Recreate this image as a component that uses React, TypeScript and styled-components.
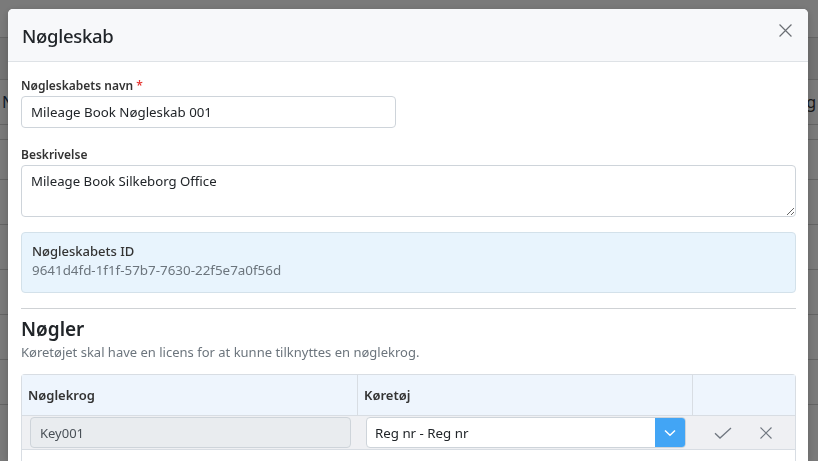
import React from 'react';
import styled, { createGlobalStyle } from 'styled-components';

// Page
//----------------------------------------------
const GlobalStyle = createGlobalStyle`
  html, body {
    margin: 0;
    padding: 0;
    background: #ffffff;
    font-family: 'Noto Sans', 'Open Sans', sans-serif;
    color: #212529;
    overflow: hidden;
  }
  * {
    box-sizing: border-box;
  }
`;

const backgroundRows = [38, 42, 45, 15, 40, 45, 45, 45, 45, 45];

const CheckIcon = () => (
  <svg width="18" height="12" viewBox="0 0 18 12" fill="none">
    <path d="M1 6.2 L6 11 L17 1" stroke="#707780" strokeWidth="1.3" />
  </svg>
);

const CrossIcon: React.FC<{ size: number; color: string }> = ({ size, color }) => (
  <svg width={size} height={size} viewBox="0 0 12 12" fill="none">
    <path d="M0.5 0.5 L11.5 11.5 M11.5 0.5 L0.5 11.5" stroke={color} strokeWidth="1.1" />
  </svg>
);

const ChevronIcon = () => (
  <svg width="12" height="8" viewBox="0 0 12 8" fill="none">
    <path d="M1 1.5 L6 6.2 L11 1.5" stroke="#ffffff" strokeWidth="1.5" />
  </svg>
);

const App: React.FC = () => {
  return (
    <>
      <GlobalStyle />
      <DivPage>
        {backgroundRows.map((h, i) => (
          <DivBgRow key={i} height={h} dark={i === 1}>
            {i === 2 && (
              <>
                <SpanBgText>N</SpanBgText>
                <SpanBgText right>g</SpanBgText>
              </>
            )}
          </DivBgRow>
        ))}
      </DivPage>

      <DivOverlay>
        <DivModal>
          <DivHeader>
            <DivTitle>Nøgleskab</DivTitle>
            <ButtonClose>
              <CrossIcon size={13} color="#6b6f74" />
            </ButtonClose>
          </DivHeader>

          <DivBody>
            <DivField>
              <Label>
                Nøgleskabets navn <SpanRequired>*</SpanRequired>
              </Label>
              <Input width={375} defaultValue="Mileage Book Nøgleskab 001" />
            </DivField>

            <DivField>
              <Label>Beskrivelse</Label>
              <TextArea defaultValue="Mileage Book Silkeborg Office" />
            </DivField>

            <DivInfo>
              <DivInfoTitle>Nøgleskabets ID</DivInfoTitle>
              <DivInfoValue>9641d4fd-1f1f-57b7-7630-22f5e7a0f56d</DivInfoValue>
            </DivInfo>

            <Hr />

            <DivSectionTitle>Nøgler</DivSectionTitle>
            <DivSectionText>
              Køretøjet skal have en licens for at kunne tilknyttes en nøglekrog.
            </DivSectionText>

            <DivTable>
              <DivHeadCell>Nøglekrog</DivHeadCell>
              <DivHeadCell>Køretøj</DivHeadCell>
              <DivHeadCell />

              <DivCell>
                <Input disabled defaultValue="Key001" />
              </DivCell>
              <DivCell>
                <DivSelect>
                  <SpanSelectValue>Reg nr - Reg nr</SpanSelectValue>
                  <DivSelectButton>
                    <ChevronIcon />
                  </DivSelectButton>
                </DivSelect>
              </DivCell>
              <DivActions>
                <ButtonAction>
                  <CheckIcon />
                </ButtonAction>
                <ButtonAction>
                  <CrossIcon size={12} color="#707780" />
                </ButtonAction>
              </DivActions>

              <DivTableFill />
            </DivTable>
          </DivBody>
        </DivModal>
      </DivOverlay>
    </>
  );
};

// Background page (behind the dialog)
//----------------------------------------------
const DivPage = styled.div`
  height: 461px;
  overflow: hidden;
  background: #ffffff;
`;

const DivBgRow = styled.div<{ height: number; dark?: boolean }>`
  height: ${(p) => p.height}px;
  border-bottom: 1px solid #d2d2d2;
  background: ${(p) => (p.dark ? '#f0f0f0' : '#ffffff')};
  display: flex;
  align-items: center;
  justify-content: space-between;
  padding: 0 2px;
`;

const SpanBgText = styled.span<{ right?: boolean }>`
  font-size: 16px;
  color: ${(p) => (p.right ? '#333333' : '#1d3a5c')};
`;

// Dialog
//----------------------------------------------
const DivOverlay = styled.div`
  position: fixed;
  inset: 0;
  background: rgba(0, 0, 0, 0.52);
  padding: 9px 0 0 8px;
  overflow: hidden;
`;

const DivModal = styled.div`
  width: 800px;
  height: 452px;
  background: #ffffff;
  border-radius: 5px 5px 0 0;
  overflow: hidden;
  box-shadow: 0 2px 8px rgba(0, 0, 0, 0.2);
`;

const DivHeader = styled.div`
  height: 53px;
  background: #f7f8fa;
  border-bottom: 1px solid #dee2e6;
  display: flex;
  align-items: center;
  padding: 0 16px 0 14px;
`;

const DivTitle = styled.div`
  font-size: 18.5px;
  font-weight: 500;
  letter-spacing: -0.3px;
  color: #212529;
  padding-top: 1px;
`;

const ButtonClose = styled.button`
  margin-left: auto;
  margin-top: -9px;
  border: none;
  background: none;
  padding: 0;
  display: flex;
  cursor: pointer;
`;

const DivBody = styled.div`
  padding: 15px 12px 0 13px;
`;

const DivField = styled.div`
  margin-bottom: 18px;
`;

const Label = styled.label`
  display: block;
  font-size: 12px;
  line-height: 18px;
  font-weight: 600;
  color: #333333;
  margin-bottom: 1px;
`;

const SpanRequired = styled.span`
  color: #e53935;
`;

const Input = styled.input<{ width?: number }>`
  display: block;
  width: ${(p) => (p.width ? `${p.width}px` : '100%')};
  height: 32px;
  border: 1px solid #ced4da;
  border-radius: 4px;
  padding: 0 9px;
  font-family: inherit;
  font-size: 13.3px;
  color: #212529;
  background: #ffffff;
  outline: none;

  &:disabled {
    background: #e9ecef;
    color: #495057;
  }
`;

const TextArea = styled.textarea`
  display: block;
  width: 100%;
  height: 52px;
  border: 1px solid #ced4da;
  border-radius: 4px;
  padding: 5px 9px;
  font-family: inherit;
  font-size: 13.2px;
  line-height: 20px;
  color: #212529;
  resize: vertical;
  outline: none;
`;

const DivInfo = styled.div`
  margin-top: -3px;
  height: 61px;
  background: #e8f4fd;
  border: 1px solid #d3e1ea;
  border-radius: 4px;
  padding: 9px 10px;
`;

const DivInfoTitle = styled.div`
  font-size: 13px;
  line-height: 19px;
  font-weight: 500;
  color: #333333;
`;

const DivInfoValue = styled.div`
  font-size: 13.4px;
  line-height: 19px;
  color: #6c757d;
`;

const Hr = styled.hr`
  border: none;
  border-top: 1px solid #cfd2d5;
  margin: 15px 0 6px 0;
`;

const DivSectionTitle = styled.div`
  font-size: 19px;
  line-height: 28px;
  font-weight: 600;
  color: #212529;
`;

const DivSectionText = styled.div`
  font-size: 13px;
  line-height: 18px;
  color: #6c757d;
  margin-bottom: 13px;
`;

const DivTable = styled.div`
  border: 1px solid #d8dde3;
  border-bottom: none;
  border-radius: 4px 4px 0 0;
  display: grid;
  grid-template-columns: 336px 335px 1fr;
`;

const DivHeadCell = styled.div`
  height: 41px;
  background: #eef5fd;
  border-bottom: 1px solid #d8dde3;
  border-right: 1px solid #d8dde3;
  display: flex;
  align-items: center;
  padding: 0 6px;
  font-size: 13px;
  font-weight: 600;
  color: #333333;

  &:nth-child(3) {
    border-right: none;
  }
`;

const DivCell = styled.div`
  height: 34px;
  background: #eff0f3;
  border-bottom: 1px solid #d8dde3;
  padding: 1px 7px 0 8px;

  input {
    height: 31px;
    font-size: 13px;
  }
`;

const DivActions = styled.div`
  height: 34px;
  background: #eff0f3;
  border-bottom: 1px solid #d8dde3;
  display: flex;
  align-items: center;
  justify-content: center;
  gap: 28px;
  padding-right: 2px;
`;

const ButtonAction = styled.button`
  border: none;
  background: none;
  padding: 0;
  display: flex;
  cursor: pointer;
`;

const DivSelect = styled.div`
  height: 31px;
  display: flex;
  align-items: stretch;
  border: 1px solid #ced4da;
  border-radius: 4px;
  background: #ffffff;
  overflow: hidden;
`;

const SpanSelectValue = styled.span`
  flex: 1;
  display: flex;
  align-items: center;
  padding: 0 8px;
  font-size: 13.3px;
  color: #212529;
`;

const DivSelectButton = styled.div`
  width: 30px;
  background: #42a5f5;
  display: flex;
  align-items: center;
  justify-content: center;
`;

const DivTableFill = styled.div`
  grid-column: 1 / -1;
  height: 20px;
  background: #ffffff;
`;

export default App;
